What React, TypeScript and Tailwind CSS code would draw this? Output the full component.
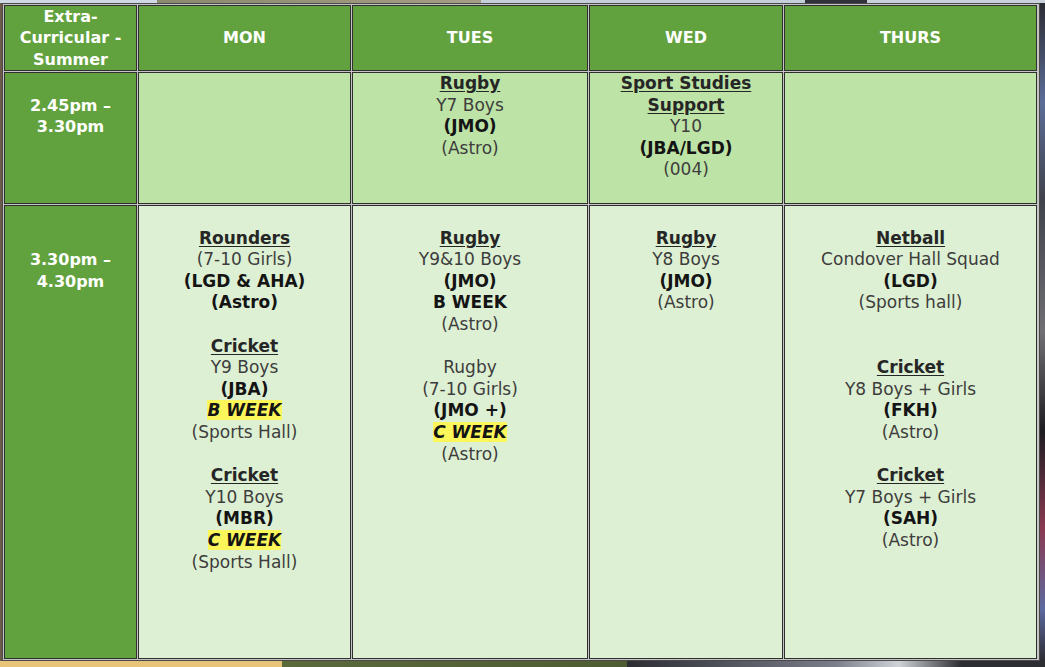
import React from 'react';

type Line =
  | { kind: 'title'; text: string }
  | { kind: 'plain'; text: string }
  | { kind: 'bold'; text: string }
  | { kind: 'week'; text: string }
  | { kind: 'blank' };

const t = (text: string): Line => ({ kind: 'title', text });
const p = (text: string): Line => ({ kind: 'plain', text });
const b = (text: string): Line => ({ kind: 'bold', text });
const w = (text: string): Line => ({ kind: 'week', text });
const gap: Line = { kind: 'blank' };

const days = ['MON', 'TUES', 'WED', 'THURS'];

// Early slot (2.45pm - 3.30pm)
const earlySlot: Line[][] = [
  [],
  [t('Rugby'), p('Y7 Boys'), b('(JMO)'), p('(Astro)')],
  [t('Sport Studies'), t('Support'), p('Y10'), b('(JBA/LGD)'), p('(004)')],
  [],
];

// Late slot (3.30pm - 4.30pm)
const lateSlot: Line[][] = [
  [
    gap,
    t('Rounders'), p('(7-10 Girls)'), b('(LGD & AHA)'), b('(Astro)'),
    gap,
    t('Cricket'), p('Y9 Boys'), b('(JBA)'), w('B WEEK'), p('(Sports Hall)'),
    gap,
    t('Cricket'), p('Y10 Boys'), b('(MBR)'), w('C WEEK'), p('(Sports Hall)'),
  ],
  [
    gap,
    t('Rugby'), p('Y9&10 Boys'), b('(JMO)'), b('B WEEK'), p('(Astro)'),
    gap,
    p('Rugby'), p('(7-10 Girls)'), b('(JMO +)'), w('C WEEK'), p('(Astro)'),
  ],
  [gap, t('Rugby'), p('Y8 Boys'), b('(JMO)'), p('(Astro)')],
  [
    gap,
    t('Netball'), p('Condover Hall Squad'), b('(LGD)'), p('(Sports hall)'),
    gap,
    gap,
    t('Cricket'), p('Y8 Boys + Girls'), b('(FKH)'), p('(Astro)'),
    gap,
    t('Cricket'), p('Y7 Boys + Girls'), b('(SAH)'), p('(Astro)'),
  ],
];

const CellLine: React.FC<{ line: Line }> = ({ line }) => {
  switch (line.kind) {
    case 'blank':
      return <div className="h-[21.6px]" />;
    case 'title':
      return <div className="font-bold underline underline-offset-2 text-[#262626]">{line.text}</div>;
    case 'bold':
      return <div className="font-bold text-[#141414]">{line.text}</div>;
    case 'week':
      return (
        <div>
          <span className="bg-[#fbf65a] font-bold italic text-[#141414]">{line.text}</span>
        </div>
      );
    default:
      return <div>{line.text}</div>;
  }
};

const cell = 'border border-[#2f2f2f]';

export default function App() {
  return (
    <div className="w-[1045px] h-[667px] overflow-hidden flex flex-col bg-[#3c3e46] font-['DejaVu_Sans',sans-serif]">
      <div className="h-[3px] shrink-0 bg-[linear-gradient(to_right,#cfd9e3_0%,#cfd9e3_15%,#8a8a6c_15%,#a59d86_46%,#c4cfd9_46%,#c4cfd9_77%,#2f3038_77%,#2f3038_83%,#c9d2dc_83%)]" />
      <div className="flex flex-1">
        <div className="w-[2px] bg-[#6b5a4a]" />
        <div className="w-[1038px] border border-[#4a4a4a] bg-[#c4c4c4] p-px">
          <div className="grid grid-cols-[133px_213px_236px_194px_253px] grid-rows-[66px_132px_454px] gap-px text-center text-[17px] leading-[21.6px] text-[#3d3d3d]">
            {/* header row */}
            <div className={`${cell} bg-[#62a23e] text-white font-bold text-[16px] flex flex-col justify-center`}>
              <div>Extra-</div>
              <div>Curricular -</div>
              <div>Summer</div>
            </div>
            {days.map((d) => (
              <div key={d} className={`${cell} bg-[#62a23e] text-white font-bold text-[16px] flex items-center justify-center`}>
                {d}
              </div>
            ))}

            {/* 2.45 - 3.30 */}
            <div className={`${cell} bg-[#62a23e] text-white font-bold text-[16px] pt-[21.6px]`}>
              <div>2.45pm –</div>
              <div>3.30pm</div>
            </div>
            {earlySlot.map((lines, i) => (
              <div key={i} className={`${cell} bg-[#bde3a6]`}>
                {lines.map((l, j) => (
                  <CellLine key={j} line={l} />
                ))}
              </div>
            ))}

            {/* 3.30 - 4.30 */}
            <div className={`${cell} bg-[#62a23e] text-white font-bold text-[16px] pt-[43.2px]`}>
              <div>3.30pm –</div>
              <div>4.30pm</div>
            </div>
            {lateSlot.map((lines, i) => (
              <div key={i} className={`${cell} bg-[#ddf0d3]`}>
                {lines.map((l, j) => (
                  <CellLine key={j} line={l} />
                ))}
              </div>
            ))}
          </div>
        </div>
        <div className="flex-1 bg-[linear-gradient(to_bottom,#2c2c34_0%,#5b6d98_15%,#40424c_30%,#6f6f74_50%,#1d1d22_65%,#8a3a52_80%,#5d6aa0_92%,#2c2c34_100%)]" />
      </div>
      <div className="h-[6px] shrink-0 bg-[linear-gradient(to_right,#e7c478_0%,#e7c478_27%,#5b6a3b_27%,#4e5c33_60%,#2c2d33_60%,#7a7e8a_80%,#cfd3d8_86%,#2c2d33_92%)]" />
    </div>
  );
}
